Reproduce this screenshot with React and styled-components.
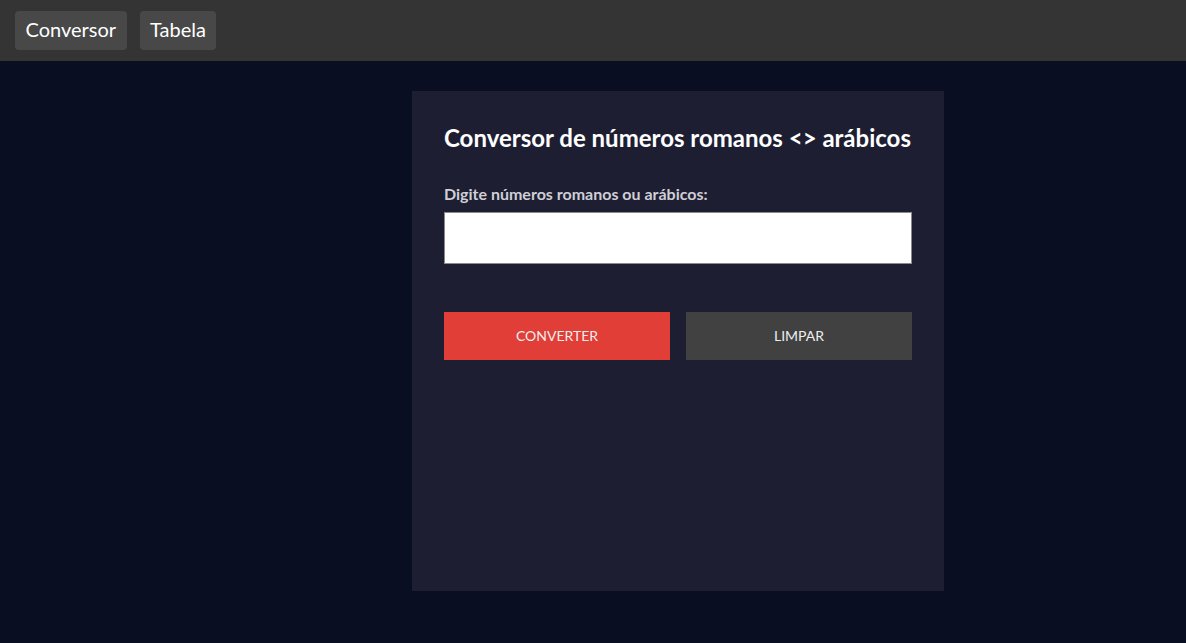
import React, {useState} from 'react';
import styled, {createGlobalStyle} from 'styled-components';

const GlobalStyle = createGlobalStyle`
    body {
        margin: 0;
        background: #0a0e22;
        font-family: Lato, "Open Sans", sans-serif;
    }
`;

const Page = styled.div`
    min-height: 643px;
    background: #0a0e22;
`;

const NavBar = styled.nav`
    display: flex;
    align-items: center;
    gap: 13px;
    height: 61px;
    padding: 0 15px;
    box-sizing: border-box;
    background: #343434;
`;

const NavButton = styled.button`
    height: 39px;
    padding: 0 10.5px 4px;
    border: none;
    border-radius: 4px;
    background: #484848;
    color: #fff;
    font-family: Lato, sans-serif;
    font-size: 20px;
    cursor: pointer;
`;

const Main = styled.main`
    display: flex;
    padding: 30px 0 0 412px;
`;

const Card = styled.section`
    width: 532px;
    height: 500px;
    box-sizing: border-box;
    padding: 32px;
    background: #1e1e33;
`;

const Title = styled.h1`
    margin: 0 0 31px;
    font-size: 24px;
    font-weight: 700;
    line-height: 30px;
    color: #fff;
`;

const Label = styled.label`
    display: block;
    margin-bottom: 9px;
    font-size: 16px;
    line-height: 19px;
    font-weight: 700;
    color: #cfcfd6;
`;

const Input = styled.input`
    display: block;
    width: 100%;
    height: 52px;
    box-sizing: border-box;
    border: 1px solid #8a8a8a;
    background: #fff;
    font-size: 18px;
    padding: 0 12px;
    outline: none;
`;

const ButtonRow = styled.div`
    display: grid;
    grid-template-columns: 1fr 1fr;
    gap: 16px;
    margin-top: 48px;
`;

const ActionButton = styled.button`
    height: 48px;
    padding: 0 6px 2px;
    border: none;
    background: ${p => p.$primary ? '#e03e36' : '#414141'};
    color: #eee;
    font-family: Lato, sans-serif;
    font-size: 14px;
    text-transform: uppercase;
    cursor: pointer;
`;

export default function App() {
    const [value, setValue] = useState('');

    return (
        <Page>
            <GlobalStyle/>
            <NavBar>
                <NavButton>Conversor</NavButton>
                <NavButton>Tabela</NavButton>
            </NavBar>
            <Main>
                <Card>
                    <Title>Conversor de números romanos &lt;&gt; arábicos</Title>
                    <Label htmlFor="numero">Digite números romanos ou arábicos:</Label>
                    <Input id="numero" value={value} onChange={e => setValue(e.target.value)}/>
                    <ButtonRow>
                        <ActionButton $primary>Converter</ActionButton>
                        <ActionButton onClick={() => setValue('')}>Limpar</ActionButton>
                    </ButtonRow>
                </Card>
            </Main>
        </Page>
    );
}
